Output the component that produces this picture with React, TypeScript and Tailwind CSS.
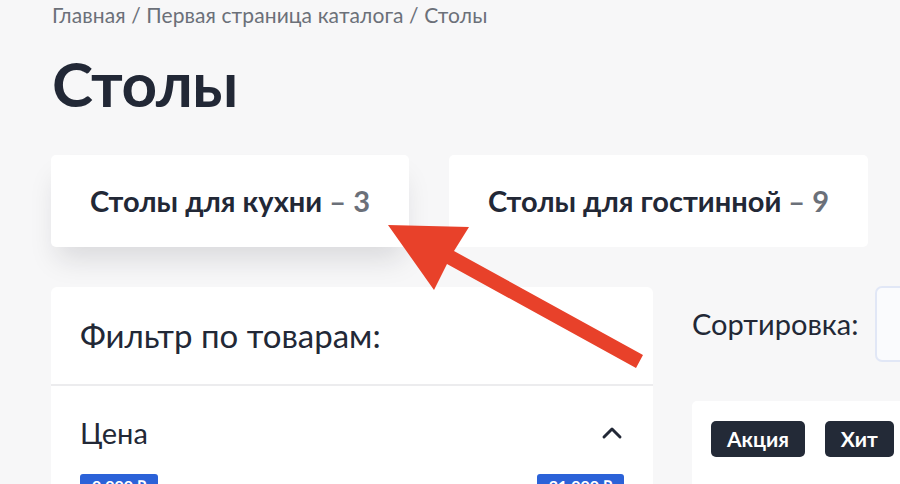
import { ChevronUp } from "lucide-react";

const categories = [
  { name: "Столы для кухни", count: 3, active: true },
  { name: "Столы для гостинной", count: 9, active: false },
];

const Arrow = () => (
  <svg
    className="absolute left-0 top-0 pointer-events-none"
    width="900"
    height="484"
    viewBox="0 0 900 484"
  >
    <polygon
      points="388,225 469,227 454,251 643,355 636,368 447,264 434,290"
      fill="#e8412a"
    />
  </svg>
);

export default function App() {
  return (
    <div className="relative w-[900px] h-[484px] overflow-hidden bg-[#f7f7f8] font-['Lato',sans-serif] text-[#222836]">
      <div className="pl-[52px] pt-[2px]">
        {/* хлебные крошки */}
        <nav className="text-[21px] leading-[26px] text-[#6b7079] tracking-[0.1px]">
          Главная / Первая страница каталога / Столы
        </nav>

        <h1 className="mt-[19px] text-[62px] leading-[72px] font-bold tracking-[-0.5px]">Столы</h1>

        {/* подкатегории */}
        <div className="mt-[36px] flex gap-[40px] -ml-px">
          {categories.map((c) => (
            <div
              key={c.name}
              className={
                "h-[92px] px-[39px] flex items-center bg-white rounded-[5px] text-[29px] font-bold whitespace-pre " +
                (c.active ? "shadow-[0_18px_28px_-6px_rgba(20,25,40,0.13)]" : "")
              }
            >
              {c.name}
              <span className="text-[#6b7079]">{" – " + c.count}</span>
            </div>
          ))}
        </div>

        <div className="mt-[40px] grid grid-cols-[602px_1fr] gap-[39px] -ml-px">
          {/* фильтр */}
          <aside className="bg-white rounded-[6px] h-[300px]">
            <div className="px-[29px] pt-[28px] pb-[29px] text-[33px] leading-[40px]">
              Фильтр по товарам:
            </div>
            <div className="h-[2px] bg-[#ececee]" />
            <div className="px-[29px] pt-[29px] flex items-center justify-between">
              <span className="text-[29px] leading-[36px]">Цена</span>
              <ChevronUp className="w-[32px] h-[32px] mr-[-4px]" strokeWidth={2.2} />
            </div>
            <div className="px-[29px] mt-[23px] flex justify-between">
              <span className="h-[24px] px-[12px] rounded-[3px] bg-[#2b62d8] text-white text-[16px] font-bold leading-[24px]">
                0 000 ₽
              </span>
              <span className="h-[24px] px-[12px] rounded-[3px] bg-[#2b62d8] text-white text-[16px] font-bold leading-[24px]">
                21 000 ₽
              </span>
            </div>
          </aside>

          {/* сортировка и товары */}
          <div>
            <div className="flex items-center h-[76px] -mt-px">
              <span className="text-[29px] leading-[34px]">Сортировка:</span>
              <div className="ml-[17px] w-[220px] h-[76px] shrink-0 rounded-[7px] border-2 border-[#e1e7f6] bg-[#fafbfd]" />
            </div>
            <div className="mt-[39px] w-[260px] h-[200px] bg-white rounded-[5px] pt-[20px] pl-[19px] flex gap-[20px] items-start">
              <span className="h-[36px] px-[16px] rounded-[5px] bg-[#232a37] text-white text-[21px] font-bold leading-[36px]">
                Акция
              </span>
              <span className="h-[36px] px-[16px] rounded-[5px] bg-[#232a37] text-white text-[21px] font-bold leading-[36px]">
                Хит
              </span>
            </div>
          </div>
        </div>
      </div>
      <Arrow />
    </div>
  );
}
